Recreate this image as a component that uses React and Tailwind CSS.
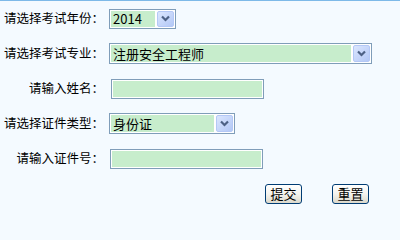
import React from 'react';

const font = { fontFamily: '"Noto Sans CJK SC", "Liberation Sans", sans-serif' };

const Arrow = () => (
  <div className="flex h-full w-[17px] items-center justify-center rounded-[2px] border border-[#b4c8f6] bg-gradient-to-br from-[#dbe6fe] to-[#b3c8f6]">
    <svg width="9" height="7" viewBox="0 0 9 7">
      <path d="M1 1.5 L4.5 5 L8 1.5" fill="none" stroke="#4d6185" strokeWidth="2.2" />
    </svg>
  </div>
);

const Select = ({ value, width, height }) => (
  <div
    className={`flex items-stretch border border-[#7f9db9] bg-white p-[1px] ${width} ${height}`}
  >
    <div className="mr-[2px] flex flex-1 items-center bg-[#c7edcc] pl-[2px] text-[13px] leading-none text-black">
      {value}
    </div>
    <Arrow />
  </div>
);

const Input = ({ width }) => (
  <div className={`h-[20px] border border-[#7f9db9] bg-white p-[1px] ${width}`}>
    <div className="h-full w-full bg-[#c7edcc]" />
  </div>
);

const Row = ({ label, children }) => (
  <div className="flex h-[35px] items-center">
    <div className="w-[105px] pr-[1px] text-right text-[12.5px] leading-none text-black">{label}</div>
    <div className="ml-[4px] flex items-center">{children}</div>
  </div>
);

const Button = ({ children }) => (
  <button className="flex h-[20px] w-[37px] items-center justify-center rounded-[3px] border border-[#003c74] bg-gradient-to-b from-white via-[#f4f3ee] to-[#dcd9cc] text-[13px] leading-none text-black">
    {children}
  </button>
);

export default function App() {
  return (
    <div className="min-h-screen w-full border-t border-[#7db9e8] bg-[#f4faff]" style={font}>
      <Row label="请选择考试年份：">
        <Select value="2014" width="w-[67px]" height="h-[20px]" />
      </Row>
      <Row label="请选择考试专业：">
        <Select value="注册安全工程师" width="w-[263px]" height="h-[21px]" />
      </Row>
      <Row label="请输入姓名：">
        <div className="ml-[2px]">
          <Input width="w-[153px]" />
        </div>
      </Row>
      <Row label="请选择证件类型：">
        <Select value="身份证" width="w-[126px]" height="h-[21px]" />
      </Row>
      <Row label="请输入证件号：">
        <div className="ml-[1px]">
          <Input width="w-[153px]" />
        </div>
      </Row>
      <div className="flex h-[35px] items-center pl-[265px]">
        <Button>提交</Button>
        <div className="w-[30px]" />
        <Button>重置</Button>
      </div>
    </div>
  );
}
